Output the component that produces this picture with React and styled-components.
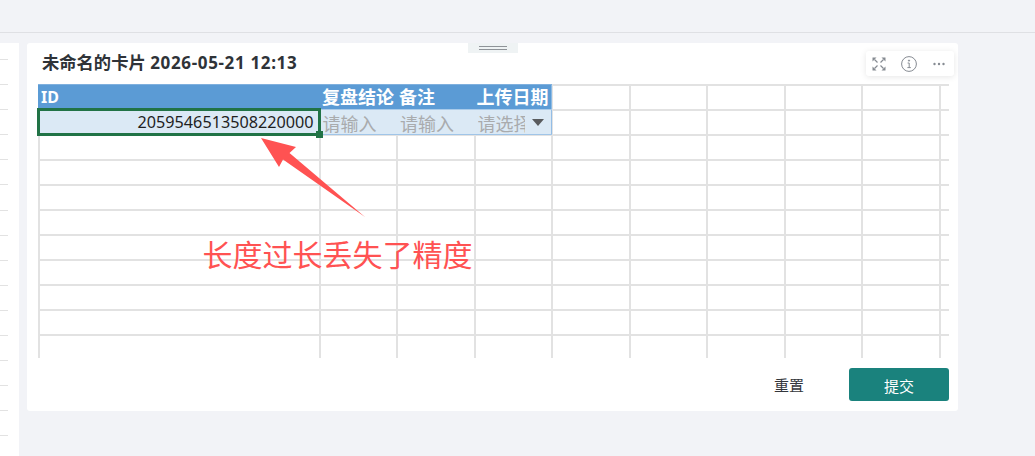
import React from "react";
import styled, { createGlobalStyle } from "styled-components";

const Global = createGlobalStyle`
  html, body { margin: 0; padding: 0; width: 1035px; height: 456px; overflow: hidden; background: #f2f3f7; }
  * { box-sizing: border-box; }
  body { font-family: "Noto Sans", "Noto Sans CJK SC", sans-serif; }
`;

const Page = styled.div`
  position: relative;
  width: 1035px;
  height: 456px;
  overflow: hidden;
  background: #f2f3f7;
  display: flex;
  flex-direction: column;
`;
const TopBar = styled.div`
  height: 33px;
  flex: none;
  border-bottom: 1px solid #dfe0e4;
`;
const Body = styled.div`
  flex: 1;
  display: flex;
  align-items: flex-start;
  padding-top: 10px;
  min-height: 0;
`;
const SidePanel = styled.div`
  width: 19px;
  height: 413px;
  flex: none;
  background: #fff;
  margin-right: 8px;
  display: flex;
  flex-direction: column;
`;
const SideLine = styled.div`
  width: 8px;
  height: 25.1px;
  flex: none;
  border-bottom: 1px solid #e2e2e2;
  &:first-child {
    height: 17px;
  }
`;
const Card = styled.div`
  position: relative;
  width: 931px;
  height: 368px;
  flex: none;
  background: #fff;
  border-radius: 3px;
  padding: 0 0 0 11px;
  display: flex;
  flex-direction: column;
`;
const Handle = styled.div`
  position: absolute;
  top: 0;
  left: 441px;
  width: 50px;
  height: 10px;
  background: #eff3f4;
  display: flex;
  flex-direction: column;
  align-items: center;
  padding-top: 3px;
  gap: 2px;
`;
const HandleBar = styled.span`
  display: block;
  width: 28px;
  height: 1px;
  background: #8f9398;
`;
const Title = styled.h2`
  margin: 0 0 0 4px;
  height: 41px;
  padding-top: 9px;
  font-size: 17.3px;
  line-height: 22px;
  font-weight: 700;
  color: #2f3338;
  white-space: nowrap;
`;
const TitleDate = styled.span`
  font-size: 17px;
  letter-spacing: 0.65px;
`;
const Tools = styled.div`
  position: absolute;
  top: 8px;
  right: 4px;
  width: 88px;
  height: 25px;
  background: #fff;
  border-radius: 3px;
  box-shadow: 0 1px 6px rgba(0, 0, 0, 0.1);
  display: flex;
  align-items: center;
  padding-left: 6px;
`;
const ToolIcon = styled.svg`
  flex: none;
  margin-right: ${(p) => p.$gap}px;
  fill: none;
  stroke: #868b92;
`;
const Sheet = styled.div`
  display: grid;
  grid-template-columns: 280.5px repeat(8, 77.5px) 10.5px;
  grid-template-rows: repeat(10, 25px) 24px;
  width: 911px;
  height: 274px;
  flex: none;
`;
const Cell = styled.div`
  position: relative;
  border-left: 2px solid #e2e2e2;
  border-top: 2px solid #e2e2e2;
  min-width: 0;
`;
const HeadCell = styled.div`
  position: relative;
  background: #5b9bd5;
  border-top: 1px solid #7fb0de;
  color: #fff;
  font-size: ${(p) => p.$size}px;
  font-weight: 700;
  line-height: 24px;
  margin-right: ${(p) => (p.$end ? "-1px" : "0")};
  padding-left: ${(p) => p.$pad}px;
  white-space: nowrap;
  overflow: hidden;
  z-index: 1;
  box-shadow: ${(p) => (p.$end ? "inset -1px 0 0 #8dbbe5" : "none")};
`;
const DataCell = styled.div`
  position: relative;
  background: #dbe9f5;
  border-top: 1px solid #a9cbea;
  border-bottom: 1px solid #a0c5e8;
  margin-bottom: -1px;
  margin-right: ${(p) => (p.$end ? "-1px" : "0")};
  box-shadow: ${(p) => (p.$end ? "inset -1px 0 0 #93bde6" : "none")};
  color: #a9abad;
  font-size: 18px;
  line-height: 28px;
  padding-left: 4px;
  white-space: nowrap;
  overflow: hidden;
  z-index: 1;
`;
const ClippedText = styled.span`
  display: block;
  width: 47px;
  overflow: hidden;
`;
const Caret = styled.span`
  position: absolute;
  top: 9px;
  right: 8px;
  width: 0;
  height: 0;
  border-left: 6px solid transparent;
  border-right: 6px solid transparent;
  border-top: 7px solid #595b5e;
`;
const ActiveCell = styled.div`
  position: relative;
  background: #dbe9f5;
  border: 3px solid #217346;
  margin: -1px -2px -2px -1px;
  color: #1f1f1f;
  font-size: 16.2px;
  line-height: 22px;
  text-align: right;
  padding-right: 4px;
  white-space: nowrap;
  z-index: 2;
`;
const FillHandle = styled.span`
  position: absolute;
  right: -5px;
  bottom: -5px;
  width: 7px;
  height: 7px;
  background: #217346;
`;
const Footer = styled.div`
  width: 911px;
  padding-top: 10px;
  display: flex;
  justify-content: flex-end;
  align-items: center;
`;
const ResetButton = styled.button`
  width: 30px;
  margin-right: 45px;
  padding: 0;
  border: 0;
  background: none;
  color: #33363b;
  font: 400 15px/33px "Noto Sans CJK SC", sans-serif;
  white-space: nowrap;
`;
const SubmitButton = styled.button`
  width: 100px;
  height: 33px;
  border: 0;
  border-radius: 3px;
  background: #1a827d;
  color: #fff;
  font: 400 15px/33px "Noto Sans CJK SC", sans-serif;
`;
const Arrow = styled.svg`
  position: absolute;
  left: 255px;
  top: 132px;
`;
const Note = styled.div`
  position: absolute;
  left: 202.5px;
  top: 231px;
  font: 400 30px/44px "Noto Sans CJK SC", sans-serif;
  color: #ff5252;
  white-space: nowrap;
`;

const heads = [
  { t: "ID", pad: 3, size: 16 },
  { t: "复盘结论", pad: 3.5, size: 18 },
  { t: "备注", pad: 3, size: 18 },
  { t: "上传日期", pad: 3, size: 18, end: true },
];

const Cells = ({ count }) =>
  Array.from({ length: count }).map((_, i) => <Cell key={i} />);

export default function App() {
  return (
    <Page>
      <Global />
      <TopBar />
      <Body>
        <SidePanel>
          {Array.from({ length: 16 }).map((_, i) => (
            <SideLine key={i} />
          ))}
        </SidePanel>
        <Card>
          <Handle>
            <HandleBar />
            <HandleBar />
          </Handle>
          <Title>
            未命名的卡片 <TitleDate>2026-05-21 12:13</TitleDate>
          </Title>
          <Tools>
            <ToolIcon $gap={15} width="14" height="14" viewBox="0 0 14 14" strokeWidth="1.2">
              <path d="M2.5 2.5l3 3M11.5 2.5l-3 3M2.5 11.5l3-3M11.5 11.5l-3-3" />
              <path d="M0.5 0.5h4l-4 4zM13.5 0.5h-4l4 4zM0.5 13.5h4l-4-4zM13.5 13.5h-4l4-4z" fill="#868b92" strokeWidth="0" />
            </ToolIcon>
            <ToolIcon $gap={16} width="16" height="16" viewBox="0 0 16 16" strokeWidth="1">
              <circle cx="8" cy="8" r="7.4" />
              <path d="M6.6 7h1.6v4.6M6.4 11.6h3.4" />
              <circle cx="8" cy="4.6" r="0.6" fill="#868b92" />
            </ToolIcon>
            <ToolIcon $gap={0} width="12" height="4" viewBox="0 0 12 4" strokeWidth="0">
              <circle cx="1.5" cy="2" r="1.2" fill="#868b92" />
              <circle cx="6" cy="2" r="1.2" fill="#868b92" />
              <circle cx="10.5" cy="2" r="1.2" fill="#868b92" />
            </ToolIcon>
          </Tools>
          <Sheet>
            {heads.map((h) => (
              <HeadCell key={h.t} $pad={h.pad} $size={h.size} $end={h.end}>
                {h.t}
              </HeadCell>
            ))}
            <Cells count={6} />
            <ActiveCell>
              2059546513508220000
              <FillHandle />
            </ActiveCell>
            <DataCell>请输入</DataCell>
            <DataCell>请输入</DataCell>
            <DataCell $end>
              <ClippedText>请选择</ClippedText>
              <Caret />
            </DataCell>
            <Cells count={6} />
            <Cells count={90} />
          </Sheet>
          <Footer>
            <ResetButton>重置</ResetButton>
            <SubmitButton>提交</SubmitButton>
          </Footer>
        </Card>
      </Body>
      <Arrow width="115" height="90" viewBox="255 132 115 90">
        <polygon points="261,138 296,147 289.5,153 365,217 283,159.5 279,167" fill="#ff5252" />
      </Arrow>
      <Note>长度过长丢失了精度</Note>
    </Page>
  );
}
